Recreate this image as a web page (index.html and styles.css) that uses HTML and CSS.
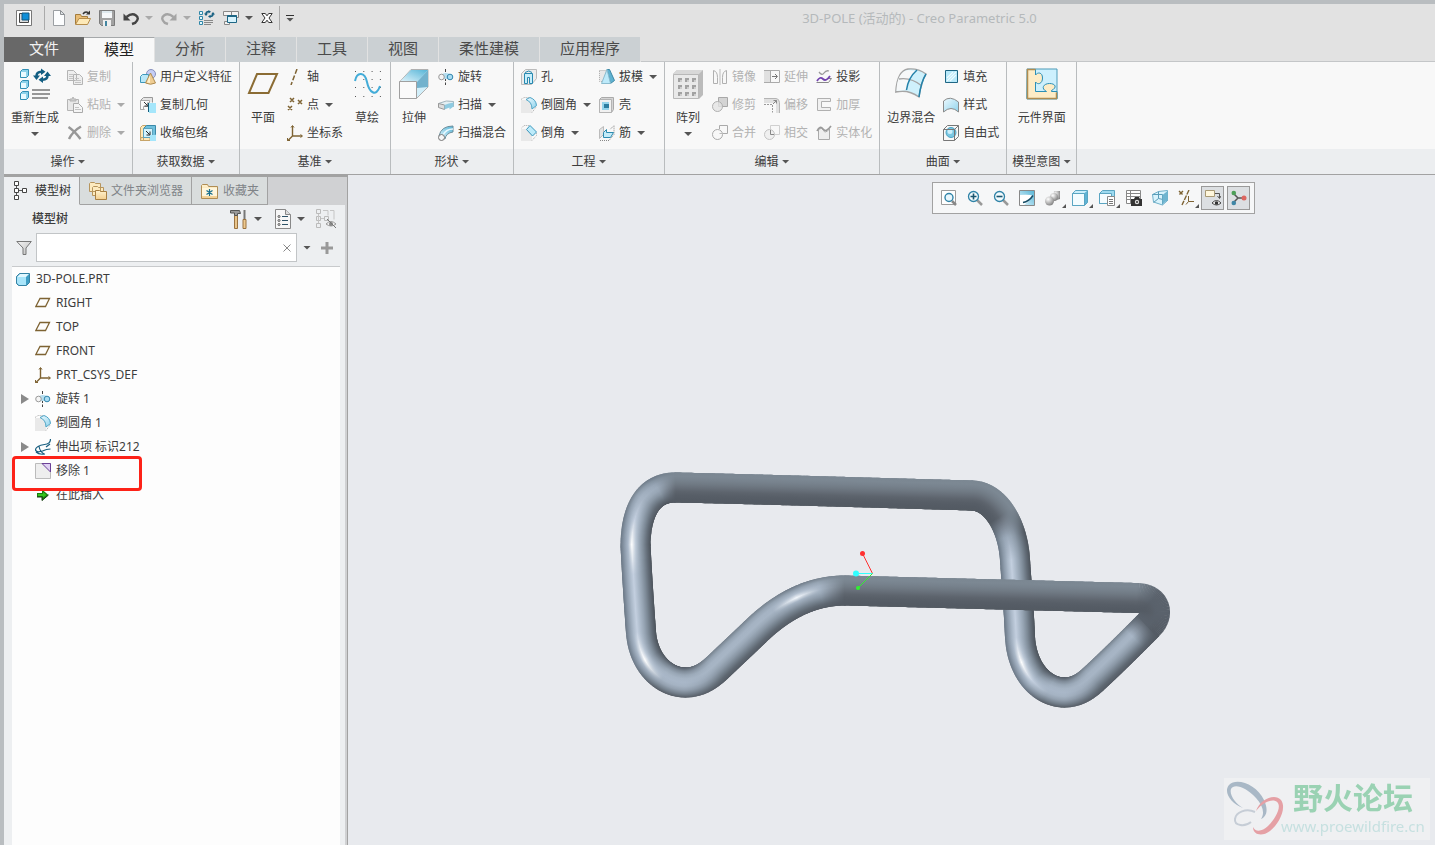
FILE: index.html
```html
<!DOCTYPE html>
<html lang="zh-CN">

<head>
    <meta charset="UTF-8">
    <meta name="viewport" content="width=device-width, initial-scale=1.0">
    <title>3D-POLE (活动的) - Creo Parametric 5.0</title>
    <link rel="stylesheet" href="styles.css">
</head>

<body>

    <!-- Icon sprite -->
    <svg class="sprite" aria-hidden="true">
        <defs>
            <linearGradient id="g-blue" x1="0" y1="0" x2="1" y2="1">
                <stop offset="0" stop-color="#eefaff" /><stop offset="1" stop-color="#8fd3ec" />
            </linearGradient>
            <linearGradient id="g-gray" x1="0" y1="0" x2="1" y2="1">
                <stop offset="0" stop-color="#f4f4f4" /><stop offset="1" stop-color="#bdbdbd" />
            </linearGradient>
            <linearGradient id="g-sky" x1="0" y1="1" x2="1" y2="0">
                <stop offset="0" stop-color="#e4f6fd" /><stop offset="1" stop-color="#55b4d6" />
            </linearGradient>
            <linearGradient id="g-gold" x1="0" y1="0" x2="0" y2="1">
                <stop offset="0" stop-color="#fff2cf" /><stop offset="1" stop-color="#f3cf90" />
            </linearGradient>
            <radialGradient id="g-ball" cx=".35" cy=".3" r=".8">
                <stop offset="0" stop-color="#fff" /><stop offset="1" stop-color="#777" />
            </radialGradient>
        </defs>

        <symbol id="app" viewBox="0 0 16 16">
            <path d="M.5.5h15v15H.5z" fill="#fff" stroke="#777" />
            <path d="M3.5 3.5h9v9h-9z" fill="#ddd" stroke="#444" />
            <path d="M6 3h7v7H6z" fill="#0f8fd8" stroke="#15567c" />
        </symbol>
        <symbol id="new" viewBox="0 0 16 16">
            <path d="M2.500.5h7l4 4v11h-11z" fill="#fcfdfe" stroke="#9b9fa3" />
            <path d="M9.500.5v4h4z" fill="#dfe3e7" stroke="#8c9094" />
        </symbol>
        <symbol id="open" viewBox="0 0 16 16">
            <path d="M.5 14V4.500h5l1 2h6V9" fill="#e9bd76" stroke="#a47c3c" />
            <path d="M.5 14.500L4 8.500h11.500l-3 6z" fill="#fde9b8" stroke="#b58c4b" />
            <path d="M8 4q2-3 5-1.500" fill="none" stroke="#333" stroke-width="1.500" />
            <path d="M11 4.500h4V.5z" fill="#333" />
        </symbol>
        <symbol id="save" viewBox="0 0 16 16">
            <path d="M.5.5h15v15h-13l-2-2z" fill="#a2a2a2" stroke="#7b7b7b" />
            <path d="M3 1h10v7H3z" fill="#f6f8fa" /><path d="M3 1h10v2H3z" fill="#dfe9ee" />
            <path d="M4 10h8v6H4z" fill="#eee" /><path d="M6 11h2v5H6z" fill="#4385a0" />
        </symbol>
        <symbol id="undo" viewBox="0 0 16 16">
            <path d="M3.500 7Q9 2.500 13 5.500t-1 7.500l-3 1" fill="none" stroke="#444" stroke-width="2.400" />
            <path d="M.5 3.500v7h7z" fill="#444" />
        </symbol>
        <symbol id="redo" viewBox="0 0 16 16">
            <path d="M12.500 7Q7 2.500 3 5.500t1 7.500l3 1" fill="none" stroke="#a4a4a4" stroke-width="2.400" />
            <path d="M15.500 3.500v7h-7z" fill="#a4a4a4" />
        </symbol>
        <symbol id="regen-s" viewBox="0 0 16 16">
            <path d="M.5 1.500h3v3h-3zM.5 6.500h3v3h-3zM.5 11.500h3v3h-3z" fill="#e3f8ff" stroke="#2f87a8" />
            <path d="M7 4Q7 1.500 10 1.500M14 4Q14 6.500 11 6.500" fill="none" stroke="#176082" stroke-width="1.500" />
            <path d="M9.500 0v3.500L12 1.700zM11.500 4.700v3.600L9 6.500zM5 3.500h4L7 6zM12 4.500h4L14 2z" fill="#176082" />
            <path d="M5 10.500h9M5 12.500h9M5 14.500h7" stroke="#888" />
        </symbol>
        <symbol id="windows" viewBox="0 0 16 16">
            <path d="M.5 1.500h8v4h-8zM8.500 1.500h7v6h-7zM1.500 11.500h5v3h-5z" fill="#f3f3f3" stroke="#888" />
            <path d="M4.500 5.500h9v7h-9z" fill="#d7f3fd" stroke="#1d6685" /><path d="M4.500 6h9" stroke="#1d6685" stroke-width="2" />
        </symbol>
        <symbol id="close" viewBox="0 0 12 12">
            <path d="M.8 1.500h3.500L6 3.800l1.700-2.300h3.500L8 6l3.200 4.500H7.700L6 8.200l-1.700 2.300H.8L4 6z" fill="#fff" stroke="#333" />
        </symbol>

        <symbol id="regen" viewBox="0 0 32 32">
            <path d="M1.500 3.500l2-2h6v6l-2 2h-6zM1.500 14.500l2-2h6v6l-2 2h-6zM1.500 25.500l2-2h6v6l-2 2h-6z" fill="#8dd2ea" stroke="#318fb4" />
            <path d="M2 4h5v5H2zM2 15h5v5H2zM2 26h5v5H2z" fill="#e9faff" />
            <path d="M17.500 8Q17.500 4 22.500 3.800M28.500 7.500Q28.500 11.500 23.500 11.800" fill="none" stroke="#135e82" stroke-width="2.500" />
            <path d="M22 .5v6.500l4.500-3.200zM24 8.500V15l-4.500-3.200zM14 7.500h7l-3.500 4.500zM25 8h7l-3.500-4.500z" fill="#135e82" />
            <path d="M13 22h18M13 26h18M13 30h16" stroke="#979797" stroke-width="2" />
        </symbol>
        <symbol id="copy" viewBox="0 0 16 16">
            <path d="M.5 1.500h6l3 3v7h-9zM6.500 5.500h6l3 3v7h-9z" fill="#eee" stroke="#b4b4b4" />
            <path d="M2 5.500h4M2 7.500h4M2 9.500h4M8 9.500h4M8 11.500h6M8 13.500h6" stroke="#c4c4c4" />
        </symbol>
        <symbol id="paste" viewBox="0 0 16 16">
            <path d="M.5 2.500h11v11H.5z" fill="#e8e8e8" stroke="#b4b4b4" />
            <path d="M3 4V2h2l1-2 1 2h2v2z" fill="#ccc" stroke="#b4b4b4" />
            <path d="M6.500 6.500h5l4 4v5h-9z" fill="#f5f5f5" stroke="#aaa" /><path d="M8 10.500h4M8 12.500h6" stroke="#c4c4c4" />
        </symbol>
        <symbol id="delete" viewBox="0 0 16 16">
            <path d="M1.500 2q6 4 12 12M14 1.500Q6 6 2 14" fill="none" stroke="#989898" stroke-width="2.500" />
        </symbol>
        <symbol id="udf" viewBox="0 0 16 16">
            <circle cx="11" cy="5" r="4.500" fill="#c5cdf6" stroke="#8790bc" />
            <path d="M.5 7.500l2-2h6v6l-2 2h-6z" fill="#b9e7f8" stroke="#3e98bb" />
            <path d="M10.500 4l5 10q-5 2.500-10 0z" fill="#efcd93" stroke="#ae8b51" />
            <path d="M10 6l-3 7.500 3 .5z" fill="#fff0cc" />
        </symbol>
        <symbol id="copygeom" viewBox="0 0 16 16">
            <path d="M.5 3.500l3-3h9v5M.5 3.500v9h4" fill="#e5e5e5" stroke="#999" /><path d="M.5 3.500h9v6h-6v3h-3z" fill="#fafafa" stroke="#aaa" />
            <path d="M4 5l3.500 3.500M8 5.500V9H4.500" fill="none" stroke="#333" />
            <path d="M9 6h7v10H9z" fill="#a5e6fb" /><path d="M8.500 6v9" stroke="#155d7a" />
        </symbol>
        <symbol id="shrink" viewBox="0 0 16 16">
            <path d="M.5 2.500l2-2h4v3h-3v12h-3zM1 12.500h9v3H.5z" fill="#ffe8b7" stroke="#c7a468" />
            <path d="M3.500 3.500l3-3h9v9l-3 3h-9z" fill="#6fc0dd" stroke="#3a89a9" /><path d="M3.500 3.500h9v9h-9z" fill="#d4f3fc" stroke="#5aa2bd" />
            <path d="M6 6l3.500 3.500M10 6.500V10H6.500" fill="none" stroke="#222" /><path d="M10 10h6v6h-6z" fill="#a5e6fb" />
        </symbol>
        <symbol id="plane" viewBox="0 0 32 32">
            <path d="M10 6h20l-8.500 19H2z" fill="none" stroke="#8b6c34" stroke-width="2" />
        </symbol>
        <symbol id="axis" viewBox="0 0 16 16">
            <path d="M10 0L4 16" fill="none" stroke="#7e6333" stroke-width="1.500" stroke-dasharray="5 2" />
        </symbol>
        <symbol id="point" viewBox="0 0 16 16">
            <path d="M3 1l4 4M7 1L3 5M11 3l4 4M15 3l-4 4M1 9l4 4M5 9l-4 4" stroke="#7e6333" stroke-width="1.500" />
        </symbol>
        <symbol id="csys" viewBox="0 0 16 16">
            <path d="M5.500 1v10h9.500M5.500 11l-5 5" fill="none" stroke="#7e6333" stroke-width="1.400" />
            <path d="M4 2.500L5.500.5 7 2.500M13.500 9.500l2 1.500-2 1.500M.5 13v2.500H3" fill="none" stroke="#7e6333" />
        </symbol>
        <symbol id="sketch" viewBox="0 0 32 32">
            <path d="M4 3.500h26M4 11.500h26M4 19.500h26M4 28.500h26" stroke="#555" stroke-dasharray="1 7.300" />
            <path d="M4 13C6 3 14 4 16 14S25 30 29 18" fill="none" stroke="#43acd8" stroke-width="2" />
        </symbol>
        <symbol id="extrude" viewBox="0 0 32 32">
            <path d="M1.500 14L13 1.500h17V19L18.500 30.500h-17z" fill="#d2effa" stroke="#b0b0b0" />
            <path d="M2 14L13 2h17L19 14z" fill="url(#g-sky)" /><path d="M19 14L30 2v17l-11 1z" fill="#73b2cd" />
            <path d="M1.500 13.500h17v17h-17z" fill="#fafafa" stroke="#a0a0a0" />
        </symbol>
        <symbol id="revolve" viewBox="0 0 16 16">
            <path d="M7.500 0v16" stroke="#444" stroke-dasharray="3 1.500" /><path d="M4 5q4-2 8 0l-3 5H6z" fill="#b4def0" />
            <circle cx="3.500" cy="8" r="2.800" fill="#f5f5f5" stroke="#999" /><circle cx="12" cy="8" r="2.800" fill="#a9dcf2" stroke="#3386ad" />
        </symbol>
        <symbol id="sweep" viewBox="0 0 16 16">
            <path d="M.5 6.500q8-4 15-2v5q-5-1-9 .5l-6-1z" fill="#e4eff3" stroke="#a3b4bb" />
            <path d="M.5 6.500l6 1.500v4.500l-6-2z" fill="#ddd" stroke="#999" /><path d="M6.500 8q4-2 9-2.500v4l-4 3v-2l-5 2z" fill="#8fcbe1" />
        </symbol>
        <symbol id="swblend" viewBox="0 0 16 16">
            <path d="M1 11Q3 1 15 1v6Q8 8 7 14z" fill="url(#g-sky)" stroke="#6d8f9d" /><path d="M5 10q3-6 10-6" fill="none" stroke="#e7f8fe" stroke-width="1.500" />
            <circle cx="3.500" cy="12.500" r="3" fill="#f5f5f5" stroke="#777" />
        </symbol>
        <symbol id="hole" viewBox="0 0 16 16">
            <path d="M.5 4.500l4-4h11v9l-5 6h-10z" fill="#ececec" stroke="#bbb" />
            <path d="M3.500 14.500v-10h8v10h-3v-6h-2v6z" fill="#c7eefb" stroke="#2789b0" /><path d="M4 3.500q4-3 7 0" fill="none" stroke="#2789b0" />
        </symbol>
        <symbol id="round" viewBox="0 0 16 16">
            <path d="M0 3h6q5 3 5 8v5H0z" fill="#e9e9e9" /><path d="M0 2.500L3 .5h5M11 15.500l4.500-6" fill="none" stroke="#aaa" stroke-dasharray="1 1" />
            <path d="M5 2.500L9 .5q6 2 6.500 8L11 12Q11 5 5 2.500z" fill="url(#g-blue)" stroke="#4da3c5" />
        </symbol>
        <symbol id="chamfer" viewBox="0 0 16 16">
            <path d="M0 4h6l5 5v7H0z" fill="#e9e9e9" /><path d="M0 3.500L3 .5h5M11 15.500l4.500-5v-3" fill="none" stroke="#aaa" stroke-dasharray="1 1" />
            <path d="M5.500 4.500L9 .5l6.500 6.500-4 4z" fill="#bdebfa" stroke="#3a96bc" />
        </symbol>
        <symbol id="draft" viewBox="0 0 16 16">
            <path d="M.5 1.500h7l-3 11h-4z" fill="#e8e8e8" stroke="#aaa" stroke-dasharray="1 1" />
            <path d="M8 .5h2.500l5 11-4 3z" fill="#5fb2d1" stroke="#3d88a5" /><path d="M8 .5l3.500 14h-9z" fill="#bdeafa" stroke="#8bbccf" />
        </symbol>
        <symbol id="shell" viewBox="0 0 16 16">
            <path d="M.5 2.500l2-2h12v12l-2 3H.5z" fill="#d4d4d4" stroke="#aaa" /><path d="M.5 2.500h12v13H.5z" fill="#f1f1f1" stroke="#b4b4b4" />
            <path d="M3 5h7v8H3z" fill="#94d3ea" /><path d="M5 7h5v4H5z" fill="#2c7da0" />
        </symbol>
        <symbol id="rib" viewBox="0 0 16 16">
            <path d="M1 15.500h9l5-6V.5l-4 4" fill="none" stroke="#888" stroke-dasharray="1 1" /><path d="M.5 4.500v9l4-4v-8z" fill="#e4e4e4" stroke="#bbb" />
            <path d="M4.500 7.500l3-3v3h7l-3 5h-7z" fill="#c4ecf9" stroke="#2d8bb0" />
        </symbol>
        <symbol id="pattern" viewBox="0 0 32 32">
            <path d="M1 6l4-4h26v25l-4 4z" fill="#bbb" /><path d="M1 6l4-4h26l-4 4z" fill="#d8d8d8" /><path d="M1.500 6.500h25v24h-25z" fill="#e9e9e9" stroke="#b8b8b8" />
            <path d="M6 10h4v4H6zM13 10h4v4h-4zM20 10h4v4h-4zM6 17h4v4H6zM13 17h4v4h-4zM20 17h4v4h-4zM6 24h4v4H6zM13 24h4v4h-4zM20 24h4v4h-4z" fill="#a2a2a2" />
            <path d="M8 12h2v2H8zM15 12h2v2h-2zM22 12h2v2h-2zM8 19h2v2H8zM15 19h2v2h-2zM22 19h2v2h-2zM8 26h2v2H8zM15 26h2v2h-2zM22 26h2v2h-2z" fill="#cecece" />
        </symbol>
        <symbol id="mirror" viewBox="0 0 16 16">
            <path d="M1.500 14.500v-13q4 1 4 7v6zM14.500 14.500v-13q-4 1-4 7v6z" fill="none" stroke="#b0b0b0" /><path d="M8 0v16" stroke="#bbb" />
        </symbol>
        <symbol id="trim" viewBox="0 0 16 16">
            <path d="M6.500.5h9v9h-9z" fill="#d4d4d4" stroke="#a8a8a8" /><circle cx="5.500" cy="9.500" r="5" fill="#e4e4e4" fill-opacity=".8" stroke="#b0b0b0" />
        </symbol>
        <symbol id="merge" viewBox="0 0 16 16">
            <path d="M7.500 4V.5h8v8H11" fill="none" stroke="#aaa" /><circle cx="5.500" cy="9.500" r="5" fill="none" stroke="#aaa" /><path d="M7.500 8.500H11" stroke="#bbb" />
        </symbol>
        <symbol id="extend" viewBox="0 0 16 16">
            <path d="M0 1h6v13H0z" fill="#e0e0e0" /><path d="M0 1.500h15.500v12H0M6.500 1.500v12" fill="none" stroke="#aaa" /><path d="M8 7.500h5M11 5l2.500 2.500L11 10" fill="none" stroke="#777" />
        </symbol>
        <symbol id="offset" viewBox="0 0 16 16">
            <path d="M0 1h12l3.500 3V16H12V6H0z" fill="#e0e0e0" /><path d="M0 1.500h12q3 0 3.500 4V16" fill="none" stroke="#b4b4b4" />
            <path d="M0 7.500h8.500v8" fill="none" stroke="#999" stroke-dasharray="2 1" /><path d="M9 7l3.500-3.500M9.500 3.500h3v3" fill="none" stroke="#888" />
        </symbol>
        <symbol id="intersect" viewBox="0 0 16 16">
            <path d="M6.500.5h9v9h-9z" fill="none" stroke="#d0d0d0" /><circle cx="5.500" cy="9.500" r="5" fill="#f0f0f0" stroke="#c4c4c4" /><path d="M6.500 5v4.500H10" fill="none" stroke="#888" />
        </symbol>
        <symbol id="project" viewBox="0 0 16 16">
            <path d="M3 3q3 4 5 1t5-2" fill="none" stroke="#999" stroke-width="1.300" /><path d="M12 9.500h3.500l-3 4H.5" fill="none" stroke="#888" />
            <path d="M1 12q3-5 6-2t7-3" fill="none" stroke="#7343ae" stroke-width="1.800" />
        </symbol>
        <symbol id="thicken" viewBox="0 0 16 16">
            <path d="M1.500 1.500h13v3h-9v6h9v3h-13z" fill="#f1f1f1" stroke="#b0b0b0" />
        </symbol>
        <symbol id="solidify" viewBox="0 0 16 16">
            <path d="M2.500 5v9.500h11V4Q9 9 7.500 5.500T3 4z" fill="#eee" stroke="#aaa" /><path d="M1 6Q4 0 7 4t8-3" fill="none" stroke="#999" stroke-width="1.600" />
        </symbol>
        <symbol id="boundary" viewBox="0 0 32 32">
            <path d="M.8 24Q2 3 13 1q10-1 18 5-5 8-7 23Q13 21 .8 24z" fill="#cff1fc" stroke="#a5a5a5" stroke-width="1.400" />
            <path d="M1.500 23Q2 4 13 2l8 1Q13 9 11.500 22z" fill="#f6f8f9" />
            <path d="M4 11q12-2 23 7" fill="none" stroke="#a5a5a5" stroke-width="1.400" /><path d="M22 2Q13 10 11.500 22M31 6q-5 8-7 23" fill="none" stroke="#2482aa" stroke-width="1.500" />
        </symbol>
        <symbol id="fill" viewBox="0 0 16 16">
            <path d="M2.500 1.500h12v12h-12z" fill="#b8e9fa" stroke="#1f6684" /><path d="M4 9l6-6M4 12l9-9M7 12l6-6" stroke="#effbff" stroke-width="1.200" />
        </symbol>
        <symbol id="style" viewBox="0 0 16 16">
            <path d="M.5 15V4Q7-2 15.500 5v10Q8 8 .5 15z" fill="url(#g-blue)" stroke="#8b8b8b" />
        </symbol>
        <symbol id="freestyle" viewBox="0 0 16 16">
            <circle cx="8" cy="7.500" r="5" fill="#7cc8e3" stroke="#4ba3c4" /><circle cx="7" cy="6.500" r="2.500" fill="#cdeffb" />
            <path d="M.5 4.500l4-4h11v11l-4 4H.5zM.5 4.500h11v11M11.500 4.500l4-4" fill="none" stroke="#777" />
        </symbol>
        <symbol id="puzzle" viewBox="0 0 32 32">
            <path d="M1 1h30v30H1z" fill="#cdf0fd" stroke="#4d9bb9" />
            <path d="M1.500 1.500h8V7c2-3 7-3 7 3s-5 7-7 4v9.500h11c-6-3-3-8 3-8s8 4 2 7v1h5.500v7H1z" fill="#fdecc6" stroke="#2b8fb6" />
            <path d="M9.500 1.500h-8v29h29v-6" fill="none" stroke="#b08c50" stroke-width="1.500" />
        </symbol>

        <symbol id="tree" viewBox="0 0 20 20">
            <path d="M4.500 5v10M5 9.500h6" stroke="#555" fill="none" /><path d="M2.500.5h4v4h-4zM2.500 7.500h4v4h-4zM2.500 14.500h4v4h-4zM10.500 7.500h4v4h-4z" fill="#fff" stroke="#444" />
        </symbol>
        <symbol id="folders" viewBox="0 0 20 20">
            <path d="M1.500 10.500v-8l1-1h4l1 1h5v8zM4.500 14.500v-8l1-1h4l1 1h5v8z" fill="#fdebc0" stroke="#b6955d" /><path d="M7.500 18.500v-9h4l1 1h6v8z" fill="url(#g-gold)" stroke="#a98043" />
        </symbol>
        <symbol id="favorite" viewBox="0 0 20 20">
            <path d="M1.500 17.500v-13l1-1h5l1 2h9v12z" fill="url(#g-gold)" stroke="#b08d54" /><path d="M2 7h15v8H2z" fill="#fff6dc" />
            <path d="M9.500 8v7M6.500 9.500l6 4M12.500 9.500l-6 4" stroke="#176e8c" stroke-width="1.200" />
        </symbol>
        <symbol id="tools" viewBox="0 0 20 20">
            <path d="M4.500 6.500h3v13h-3z" fill="#e8c48b" stroke="#9b7340" /><path d="M.5 1.500h9l1 3h-3v2h-3V4h-4z" fill="#999" stroke="#555" />
            <path d="M14.500 1v9" stroke="#777" stroke-width="2" /><path d="M13 10.500h3v9h-3z" fill="#edc98f" stroke="#9b7340" />
        </symbol>
        <symbol id="settings" viewBox="0 0 20 20">
            <path d="M2.500.5h10l5 5v14h-15z" fill="#f7f7f7" stroke="#888" /><path d="M12.500.5v5h5" fill="#ddd" stroke="#888" />
            <circle cx="6" cy="7.500" r="1" fill="none" stroke="#555" /><circle cx="6" cy="11.500" r="1" fill="none" stroke="#555" /><circle cx="6" cy="15.500" r="1" fill="none" stroke="#555" />
            <path d="M9 7.500h6M9 11.500h6M9 15.500h6" stroke="#2f5367" />
        </symbol>
        <symbol id="columns" viewBox="0 0 20 20">
            <path d="M.5.5h4v4h-4zM.5 7.500h4v4h-4zM.5 14.500h4v4h-4zM8.500 7.500h4v4h-4z" fill="none" stroke="#bbb" />
            <path d="M2.500 5v9M5 9.500h3M7 1.500h5v5M14 1.500h4v9" fill="none" stroke="#c5c5c5" />
            <path d="M10 15q5-5 10 0-5 4-10 0z" fill="#eee" stroke="#999" /><circle cx="15" cy="15" r="2" fill="#888" /><path d="M11 10l9 9" stroke="#777" />
        </symbol>
        <symbol id="funnel" viewBox="0 0 16 16">
            <path d="M.8 1.500h14.500L10 8v6.500H7V8z" fill="url(#g-gray)" stroke="#777" />
        </symbol>
        <symbol id="plus" viewBox="0 0 12 12"><path d="M6 0v12M0 6h12" stroke="#999" stroke-width="3" /></symbol>
        <symbol id="cross" viewBox="0 0 8 8"><path d="M.5.5l7 7M7.500.5l-7 7" stroke="#888" /></symbol>
        <symbol id="part" viewBox="0 0 16 16">
            <path d="M.5 5.500l3-3h10v9l-3 3h-8l-2-2z" fill="#3f9ec4" stroke="#3582a4" /><path d="M1 6l3-3h9l-3 3z" fill="#e1f7fe" /><path d="M1 6h9v8H3l-2-2z" fill="#a9e5fa" />
        </symbol>
        <symbol id="plane-s" viewBox="0 0 16 16"><path d="M5 3.500h9.500l-4 8H.8z" fill="none" stroke="#7e6333" stroke-width="1.300" /></symbol>
        <symbol id="protrude" viewBox="0 0 16 16">
            <path d="M15.500 0q0 5-6 5.500Q.5 7 .5 11q1 3 7 1 4-2 8-2M4 7.500q1 5 5 7.500M1 13q3 3 9 2M15 5l-4 3" fill="none" stroke="#195f80" stroke-width="1.200" />
        </symbol>
        <symbol id="remove" viewBox="0 0 16 16">
            <path d="M.5.5h15v15H.5z" fill="#eee" stroke="#bbb" /><path d="M7 .5h8.500V9z" fill="#dfd0f3" stroke="#6b4096" />
        </symbol>
        <symbol id="insert" viewBox="0 0 16 16">
            <path d="M2 6h5V2.500L13.500 8 7 13.500V10H2z" fill="#1c7d10" /><path d="M3 7h5V5l3.500 3L8 10.500V9H3z" fill="#35c21d" />
            <path d="M2 10h5v3.500L13.500 8" fill="none" stroke="#143c10" />
        </symbol>

        <symbol id="v-fit" viewBox="0 0 16 16">
            <path d="M.5 14.500V.5h14v14z" fill="#fff" stroke="#9c9c9c" /><path d="M11 11l4 4" stroke="#888" stroke-width="2.500" /><circle cx="8" cy="7.500" r="4" fill="#e9f7fd" stroke="#2f83a7" stroke-width="1.400" />
        </symbol>
        <symbol id="v-in" viewBox="0 0 16 16">
            <path d="M10 10l5 5" stroke="#999" stroke-width="2.500" /><circle cx="6.500" cy="6.500" r="5" fill="#f2fafd" stroke="#2f83a7" stroke-width="1.300" /><path d="M3.500 6.500h6M6.500 3.500v6" stroke="#1a566f" stroke-width="1.600" />
        </symbol>
        <symbol id="v-out" viewBox="0 0 16 16">
            <path d="M10 10l5 5" stroke="#999" stroke-width="2.500" /><circle cx="6.500" cy="6.500" r="5" fill="#f2fafd" stroke="#2f83a7" stroke-width="1.300" /><path d="M3.500 6.500h6" stroke="#1a566f" stroke-width="1.600" />
        </symbol>
        <symbol id="v-repaint" viewBox="0 0 16 16">
            <path d="M.5.5h15v15H.5z" fill="url(#g-sky)" stroke="#888" /><path d="M1 5q10-1 13 1-4 6-9 9H1z" fill="#fff" /><path d="M4 12.500q6-1 10-7" fill="none" stroke="#174d66" stroke-width="1.500" />
        </symbol>
        <symbol id="v-shade" viewBox="0 0 16 16">
            <path d="M9 1h6v8l-7 2z" fill="url(#g-ball)" /><circle cx="9" cy="7" r="4" fill="url(#g-ball)" /><circle cx="4.500" cy="11" r="4.500" fill="url(#g-ball)" />
        </symbol>
        <symbol id="v-style" viewBox="0 0 16 16">
            <path d="M.5 3.500l3-3h12v12l-3 3H.5z" fill="#5fb3d4" stroke="#5aa5c2" /><path d="M.5 3.500h12v12H.5z" fill="#f4fcff" stroke="#5aa5c2" /><path d="M1.500 3l2-2H15l-2.500 2z" fill="#cbeffc" />
        </symbol>
        <symbol id="v-saved" viewBox="0 0 16 16">
            <path d="M.5 3.500l3-3h12v12l-3 1H.5z" fill="#9ddaf0" stroke="#5aa5c2" /><path d="M.5 3.500h12v10H.5z" fill="#f4fcff" stroke="#5aa5c2" />
            <path d="M8.500 6.500h7v9h-7z" fill="#fff" stroke="#888" /><path d="M10 9.500h4M10 11.500h4M10 13.500h4" stroke="#777" />
        </symbol>
        <symbol id="v-manager" viewBox="0 0 16 16">
            <path d="M.5.5h14v13H.5zM.5 3.500h14M.5 6.500h14M.5 9.500h14M4.500.5v13" fill="#fff" stroke="#888" />
            <path d="M5 9h3l1-2h4l1 2h2v7H5z" fill="#333" /><circle cx="11" cy="12" r="2.200" fill="#ddd" /><circle cx="11" cy="12" r="1" fill="#333" />
        </symbol>
        <symbol id="v-persp" viewBox="0 0 16 16">
            <path d="M.5 4.500l6-3 9-1v10l-5 4.500-9-3z" fill="#d9f3fc" stroke="#6fb0ca" /><path d="M6.500 1.500v7l-5 4M6.500 8.500l9 2M.5 4.500h10v10" fill="none" stroke="#5a9db9" /><path d="M10.500 5l5-4v9l-5 4.500z" fill="#6fb5d0" />
        </symbol>
        <symbol id="v-datum" viewBox="0 0 16 16">
            <path d="M1 1l4 4M5 1L1 5M11 0L4 15" stroke="#7e6333" stroke-width="1.400" stroke-dasharray="5 1" /><path d="M10.500 6v5.500H16M10.500 11.500l-2.500 3" fill="none" stroke="#7e6333" />
        </symbol>
        <symbol id="v-annot" viewBox="0 0 16 16">
            <path d="M.5.5h9v6h-9z" fill="#fff7dc" stroke="#a99a75" /><path d="M10 3.500h4.500V8M12.500 6l2 2.500L16 6" fill="none" stroke="#555" />
            <path d="M7 13q4.500-5 9 0-4.500 4-9 0z" fill="#fff" stroke="#444" /><circle cx="11.500" cy="13" r="1.800" fill="#333" />
        </symbol>
        <symbol id="v-spin" viewBox="0 0 16 16">
            <path d="M7 8L2 3M7 8h6M7 8l-5 5" stroke="#555" stroke-width="1.500" /><circle cx="2.800" cy="3" r="2.300" fill="#4d9f58" /><circle cx="13" cy="8" r="2.500" fill="#dc6660" /><circle cx="2.800" cy="13" r="2.300" fill="#3f86a5" />
        </symbol>
    </svg>

    <div class="window">
        <header class="title-bar">
            <div class="quick-access">
                <button class="qa-button system" aria-label="窗口"><svg class="icon"><use href="#app" /></svg></button>
                <span class="separator"></span>
                <button class="qa-button" aria-label="新建"><svg class="icon"><use href="#new" /></svg></button>
                <button class="qa-button" aria-label="打开"><svg class="icon"><use href="#open" /></svg></button>
                <button class="qa-button" aria-label="保存"><svg class="icon"><use href="#save" /></svg></button>
                <button class="qa-button" aria-label="撤消"><svg class="icon"><use href="#undo" /></svg><i class="arrow dim"></i></button>
                <button class="qa-button" aria-label="重做"><svg class="icon"><use href="#redo" /></svg><i class="arrow dim"></i></button>
                <button class="qa-button" aria-label="重新生成模型"><svg class="icon"><use href="#regen-s" /></svg></button>
                <button class="qa-button" aria-label="窗口列表"><svg class="icon"><use href="#windows" /></svg><i class="arrow"></i></button>
                <button class="qa-button" aria-label="关闭"><svg class="icon small"><use href="#close" /></svg></button>
                <span class="separator"></span>
                <button class="qa-button customize" aria-label="自定义"><i class="arrow"></i></button>
            </div>
            <div class="window-title">3D-POLE (活动的) - Creo Parametric 5.0</div>
        </header>

        <nav class="tabs">
            <button class="tab file">文件</button>
            <button class="tab active">模型</button>
            <button class="tab">分析</button>
            <button class="tab">注释</button>
            <button class="tab">工具</button>
            <button class="tab">视图</button>
            <button class="tab">柔性建模</button>
            <button class="tab">应用程序</button>
        </nav>

        <div class="ribbon">
            <section class="group">
                <div class="group-body">
                    <button class="big wide"><svg class="icon-big"><use href="#regen" /></svg><span>重新生成</span><i class="arrow"></i></button>
                    <div class="column">
                        <button class="cmd" disabled><svg class="icon"><use href="#copy" /></svg>复制</button>
                        <button class="cmd" disabled><svg class="icon"><use href="#paste" /></svg>粘贴<i class="arrow"></i></button>
                        <button class="cmd" disabled><svg class="icon"><use href="#delete" /></svg>删除<i class="arrow"></i></button>
                    </div>
                </div>
                <button class="group-label">操作<i class="arrow"></i></button>
            </section>
            <section class="group">
                <div class="group-body">
                    <div class="column">
                        <button class="cmd"><svg class="icon"><use href="#udf" /></svg>用户定义特征</button>
                        <button class="cmd"><svg class="icon"><use href="#copygeom" /></svg>复制几何</button>
                        <button class="cmd"><svg class="icon"><use href="#shrink" /></svg>收缩包络</button>
                    </div>
                </div>
                <button class="group-label">获取数据<i class="arrow"></i></button>
            </section>
            <section class="group">
                <div class="group-body">
                    <button class="big"><svg class="icon-big"><use href="#plane" /></svg><span>平面</span></button>
                    <div class="column">
                        <button class="cmd"><svg class="icon"><use href="#axis" /></svg>轴</button>
                        <button class="cmd"><svg class="icon"><use href="#point" /></svg>点<i class="arrow"></i></button>
                        <button class="cmd"><svg class="icon"><use href="#csys" /></svg>坐标系</button>
                    </div>
                    <button class="big"><svg class="icon-big"><use href="#sketch" /></svg><span>草绘</span></button>
                </div>
                <button class="group-label">基准<i class="arrow"></i></button>
            </section>
            <section class="group">
                <div class="group-body">
                    <button class="big"><svg class="icon-big"><use href="#extrude" /></svg><span>拉伸</span></button>
                    <div class="column">
                        <button class="cmd"><svg class="icon"><use href="#revolve" /></svg>旋转</button>
                        <button class="cmd"><svg class="icon"><use href="#sweep" /></svg>扫描<i class="arrow"></i></button>
                        <button class="cmd"><svg class="icon"><use href="#swblend" /></svg>扫描混合</button>
                    </div>
                </div>
                <button class="group-label">形状<i class="arrow"></i></button>
            </section>
            <section class="group">
                <div class="group-body">
                    <div class="column">
                        <button class="cmd"><svg class="icon"><use href="#hole" /></svg>孔</button>
                        <button class="cmd"><svg class="icon"><use href="#round" /></svg>倒圆角<i class="arrow"></i></button>
                        <button class="cmd"><svg class="icon"><use href="#chamfer" /></svg>倒角<i class="arrow"></i></button>
                    </div>
                    <div class="column">
                        <button class="cmd"><svg class="icon"><use href="#draft" /></svg>拔模<i class="arrow"></i></button>
                        <button class="cmd"><svg class="icon"><use href="#shell" /></svg>壳</button>
                        <button class="cmd"><svg class="icon"><use href="#rib" /></svg>筋<i class="arrow"></i></button>
                    </div>
                </div>
                <button class="group-label">工程<i class="arrow"></i></button>
            </section>
            <section class="group">
                <div class="group-body">
                    <button class="big"><svg class="icon-big"><use href="#pattern" /></svg><span>阵列</span><i class="arrow"></i></button>
                    <div class="column">
                        <button class="cmd" disabled><svg class="icon"><use href="#mirror" /></svg>镜像</button>
                        <button class="cmd" disabled><svg class="icon"><use href="#trim" /></svg>修剪</button>
                        <button class="cmd" disabled><svg class="icon"><use href="#merge" /></svg>合并</button>
                    </div>
                    <div class="column">
                        <button class="cmd" disabled><svg class="icon"><use href="#extend" /></svg>延伸</button>
                        <button class="cmd" disabled><svg class="icon"><use href="#offset" /></svg>偏移</button>
                        <button class="cmd" disabled><svg class="icon"><use href="#intersect" /></svg>相交</button>
                    </div>
                    <div class="column">
                        <button class="cmd"><svg class="icon"><use href="#project" /></svg>投影</button>
                        <button class="cmd" disabled><svg class="icon"><use href="#thicken" /></svg>加厚</button>
                        <button class="cmd" disabled><svg class="icon"><use href="#solidify" /></svg>实体化</button>
                    </div>
                </div>
                <button class="group-label">编辑<i class="arrow"></i></button>
            </section>
            <section class="group">
                <div class="group-body">
                    <button class="big wide"><svg class="icon-big"><use href="#boundary" /></svg><span>边界混合</span></button>
                    <div class="column">
                        <button class="cmd"><svg class="icon"><use href="#fill" /></svg>填充</button>
                        <button class="cmd"><svg class="icon"><use href="#style" /></svg>样式</button>
                        <button class="cmd"><svg class="icon"><use href="#freestyle" /></svg>自由式</button>
                    </div>
                </div>
                <button class="group-label">曲面<i class="arrow"></i></button>
            </section>
            <section class="group">
                <div class="group-body">
                    <button class="big wide"><svg class="icon-big"><use href="#puzzle" /></svg><span>元件界面</span></button>
                </div>
                <button class="group-label">模型意图<i class="arrow"></i></button>
            </section>
        </div>

        <main class="workspace">
            <aside class="navigator">
                <div class="nav-tabs">
                    <button class="nav-tab active"><svg class="icon-nav"><use href="#tree" /></svg>模型树</button>
                    <button class="nav-tab"><svg class="icon-nav"><use href="#folders" /></svg>文件夹浏览器</button>
                    <button class="nav-tab"><svg class="icon-nav"><use href="#favorite" /></svg>收藏夹</button>
                </div>
                <div class="nav-panel">
                    <div class="tree-header">
                        <h2>模型树</h2>
                        <button class="tool" aria-label="工具"><svg class="icon-nav"><use href="#tools" /></svg><i class="arrow"></i></button>
                        <button class="tool" aria-label="设置"><svg class="icon-nav"><use href="#settings" /></svg><i class="arrow"></i></button>
                        <button class="tool" aria-label="树列" disabled><svg class="icon-nav"><use href="#columns" /></svg></button>
                    </div>
                    <div class="filter">
                        <svg class="icon"><use href="#funnel" /></svg>
                        <div class="filter-box">
                            <input type="text" aria-label="过滤器">
                            <button aria-label="清除"><svg class="icon-x"><use href="#cross" /></svg></button>
                        </div>
                        <button class="filter-more" aria-label="过滤选项"><i class="arrow"></i></button>
                        <button aria-label="添加"><svg class="icon small"><use href="#plus" /></svg></button>
                    </div>
                    <ul class="tree">
                        <li class="root"><svg class="icon"><use href="#part" /></svg>3D-POLE.PRT</li>
                        <li><svg class="icon"><use href="#plane-s" /></svg>RIGHT</li>
                        <li><svg class="icon"><use href="#plane-s" /></svg>TOP</li>
                        <li><svg class="icon"><use href="#plane-s" /></svg>FRONT</li>
                        <li><svg class="icon"><use href="#csys" /></svg>PRT_CSYS_DEF</li>
                        <li class="parent"><svg class="icon"><use href="#revolve" /></svg>旋转 1</li>
                        <li><svg class="icon"><use href="#round" /></svg>倒圆角 1</li>
                        <li class="parent"><svg class="icon"><use href="#protrude" /></svg>伸出项 标识212</li>
                        <li class="marked"><svg class="icon"><use href="#remove" /></svg>移除 1</li>
                        <li><svg class="icon"><use href="#insert" /></svg>在此插入</li>
                    </ul>
                </div>
            </aside>

            <div class="viewport">
                <canvas id="model"></canvas>
                <div class="view-bar">
                    <button aria-label="重新调整"><svg class="icon"><use href="#v-fit" /></svg></button>
                    <button aria-label="放大"><svg class="icon"><use href="#v-in" /></svg></button>
                    <button aria-label="缩小"><svg class="icon"><use href="#v-out" /></svg></button>
                    <button aria-label="重画"><svg class="icon"><use href="#v-repaint" /></svg></button>
                    <button class="drop" aria-label="渲染"><svg class="icon"><use href="#v-shade" /></svg></button>
                    <button class="drop" aria-label="显示样式"><svg class="icon"><use href="#v-style" /></svg></button>
                    <button class="drop" aria-label="已保存方向"><svg class="icon"><use href="#v-saved" /></svg></button>
                    <button aria-label="视图管理器"><svg class="icon"><use href="#v-manager" /></svg></button>
                    <button aria-label="透视图"><svg class="icon"><use href="#v-persp" /></svg></button>
                    <button class="drop" aria-label="基准显示"><svg class="icon"><use href="#v-datum" /></svg></button>
                    <button class="on" aria-label="注释显示"><svg class="icon"><use href="#v-annot" /></svg></button>
                    <button class="on" aria-label="旋转中心"><svg class="icon"><use href="#v-spin" /></svg></button>
                </div>
                <div class="watermark">
                    <svg class="watermark-logo" viewBox="0 0 58 58">
                        <path fill-rule="evenodd" fill="#a9b8c6" d="M3 5C11-3 31 5 38 20c5 11 2 17-3 19 4-6 2-13-5-21C20 7 8 3 5 9c-2 6 5 15 12 19C5 24-3 12 3 5z" />
                        <path fill-rule="evenodd" fill="#e5a0a5" d="M30 31c4-12 19-18 25-11 6 8-2 24-11 31-8 6-17 4-17-4 2 5 9 5 15-1 8-8 14-20 9-24-4-4-14 0-21 9z" />
                        <path fill="none" stroke="#c6cdd6" stroke-width="2" d="M29 32c-9-4-19 0-20 7s10 8 16 3" />
                    </svg>
                    <div class="watermark-text">
                        <strong>野火论坛</strong>
                        <span>www.proewildfire.cn</span>
                    </div>
                </div>
            </div>
        </main>
    </div>

    <script src="model.js"></script>
</body>

</html>
```

FILE: styles.css
```css
*,
*::before,
*::after {
    box-sizing: border-box;
}

body {
    margin: 0;
    font-family: "Noto Sans", "Noto Sans CJK SC", sans-serif;
    font-size: 12px;
    line-height: 16px;
    color: #3c3c3c;
    background-color: #b9bdc0;
}

button {
    display: flex;
    align-items: center;
    padding: 0;
    border: none;
    background: none;
    font: inherit;
    color: inherit;
    white-space: nowrap;
}

svg {
    flex: none;
}

.sprite {
    position: absolute;
    width: 0;
    height: 0;
}

.icon {
    width: 16px;
    height: 16px;
}

.icon.small {
    width: 12px;
    height: 12px;
}

.icon-big {
    width: 32px;
    height: 32px;
}

.icon-nav {
    width: 20px;
    height: 20px;
}

.icon-x {
    width: 8px;
    height: 8px;
}

.arrow {
    flex: none;
    width: 8px;
    height: 4px;
    background-color: #555;
    clip-path: polygon(0 0, 100% 0, 50% 100%);
}

.window {
    display: flex;
    flex-direction: column;
    min-height: 100vh;
    padding: 4px 0 0 4px;
}

/* Title bar */
.title-bar {
    display: flex;
    align-items: center;
    height: 33px;
    padding-bottom: 5px;
    background-color: #e2e2e2;
}

.quick-access {
    display: flex;
    align-items: center;
    gap: 8px;
    padding-left: 12px;
}

.qa-button {
    gap: 6px;
}

.qa-button.system {
    padding-right: 6px;
}

.qa-button .dim {
    background-color: #aaa;
}

.customize {
    padding-top: 2px;
    border-top: 1px solid #333;
}

.separator {
    width: 1px;
    height: 24px;
    margin: 0 -2px;
    background-color: #aaa;
}

.window-title {
    flex: 1;
    margin-left: 110px;
    font-size: 13px;
    text-align: center;
    color: #b5b9bb;
}

/* Ribbon tabs */
.tabs {
    display: flex;
    height: 25px;
    background-color: #e2e2e2;
    box-shadow: inset 0 -1px #c4c6c8;
}

.tab {
    padding: 0 20px 3px;
    border-right: 1px solid #e2e2e2;
    background-color: #cbd0d3;
    font-size: 15px;
    color: #4a4a4a;
}

.tab.file {
    padding: 0 25px 3px;
    border-right: none;
    background-color: #686868;
    color: #f2f2f2;
}

.tab.active {
    border-top: 1px solid #a5a8aa;
    background-color: #f8f8f8;
    color: #222;
}

/* Ribbon */
.ribbon {
    display: flex;
    height: 113px;
    border-bottom: 1px solid #a2a2a2;
    background: linear-gradient(#f8f8f8 87px, #eceef0 87px);
}

.group {
    display: flex;
    flex-direction: column;
    border-right: 1px solid #b9bcbe;
}

.group-body {
    display: flex;
    justify-content: center;
    gap: 8px;
    height: 87px;
    padding: 1px 7px 0;
}

.group-label {
    flex: 1;
    justify-content: center;
    gap: 3px;
    padding: 0 5px;
}

.big {
    flex-direction: column;
    width: 32px;
    padding-top: 5px;
}

.big.wide {
    width: 48px;
}

.big span {
    margin: 10px 0 6px;
}

.column {
    display: flex;
    flex-direction: column;
}

.cmd {
    gap: 4px;
    height: 28px;
}

.cmd .arrow {
    margin-left: 2px;
}

.cmd:disabled {
    color: #b2b2b2;
}

.cmd:disabled .arrow {
    background-color: #aaa;
}

/* Navigator */
.workspace {
    display: flex;
    flex: 1;
}

.navigator {
    display: flex;
    flex-direction: column;
    width: 344px;
    padding-right: 2px;
    border-top: 2px solid #a2a2a2;
    border-right: 1px solid #a2a2a2;
    background-color: #d0d1d3;
}

.nav-tabs {
    display: flex;
    height: 28px;
}

.nav-tab {
    gap: 3px;
    padding: 0 8px;
    border-right: 1px solid #a2a2a2;
    border-bottom: 1px solid #a2a2a2;
    background-color: #d9dddd;
    color: #808488;
}

.nav-tab.active {
    border-bottom-color: #edeff1;
    background-color: #edeff1;
    color: #333;
}

.nav-panel {
    display: flex;
    flex: 1;
    flex-direction: column;
    padding: 0 5px 0 8px;
    background-color: #edeff1;
}

.tree-header {
    display: flex;
    align-items: center;
    gap: 11px;
    height: 28px;
    padding-right: 4px;
}

.tree-header h2 {
    flex: 1;
    margin: 0;
    padding-left: 20px;
    font-size: 12px;
    font-weight: 500;
}

.tool {
    gap: 4px;
}

.filter {
    display: flex;
    align-items: center;
    gap: 4px;
    height: 29px;
    margin-bottom: 4px;
    padding: 0 7px 0 4px;
}

.filter-box {
    display: flex;
    flex: 1;
    align-self: stretch;
    padding-right: 5px;
    border: 1px solid #c2c5c7;
    background-color: #fff;
}

.filter-box input {
    flex: 1;
    min-width: 0;
    border: none;
    outline: none;
    background: none;
    font: inherit;
}

.filter-more {
    padding: 0 6px 0 2px;
}

.tree {
    flex: 1;
    margin: 0;
    padding: 0;
    border-top: 1px solid #c8cacc;
    background-color: #fdfdfd;
    list-style: none;
}

.tree li {
    display: flex;
    position: relative;
    align-items: center;
    gap: 5px;
    height: 24px;
    padding-left: 23px;
}

.tree .root {
    gap: 4px;
    padding-left: 4px;
}

.tree .parent {
    padding-left: 9px;
}

.tree .parent::before {
    content: "";
    width: 8px;
    height: 10px;
    margin-right: 1px;
    background-color: #8a8a8a;
    clip-path: polygon(0 0, 100% 50%, 0 100%);
}

/* Red frame round the feature in question */
.tree .marked::after {
    content: "";
    position: absolute;
    top: -3px;
    left: 0;
    width: 130px;
    height: 35px;
    border: 3px solid #fd2218;
    border-radius: 4px;
    z-index: 1;
}

/* Graphics area */
.viewport {
    display: flex;
    position: relative;
    flex: 1;
    min-width: 0;
    background-color: #e8eaee;
}

#model {
    position: absolute;
    width: 100%;
    height: 100%;
}

.view-bar {
    display: flex;
    position: absolute;
    top: 7px;
    right: 180px;
    gap: 3px;
    padding: 3px 4px;
    border: 1px solid #a2a2a2;
    background-color: #f6f7f8;
}

.view-bar button {
    position: relative;
    justify-content: center;
    width: 23px;
    height: 24px;
    border: 1px solid transparent;
}

.view-bar .drop {
    width: 24px;
}

.view-bar .drop::after {
    content: "";
    position: absolute;
    right: -2px;
    bottom: 1px;
    border: 2px solid;
    border-color: transparent #555 #555 transparent;
}

.view-bar .on {
    border-color: #999;
    background-color: #dcdfe2;
}

.watermark {
    display: flex;
    position: absolute;
    right: 5px;
    bottom: 5px;
    width: 206px;
    height: 62px;
    background-color: #eff0f2;
}

.watermark-logo {
    width: 58px;
    height: 58px;
    margin: 2px 0 0 2px;
}

.watermark-text {
    display: flex;
    flex-direction: column;
    flex: 1;
    min-width: 0;
    margin-left: -3px;
}

.watermark strong {
    padding-left: 12px;
    font-size: 30px;
    line-height: 40px;
    font-weight: 700;
    color: #9ad2b3;
}

.watermark span {
    font-size: 15px;
    color: #c6e0e0;
}
```

FILE: model.js
```javascript
const canvas = document.getElementById('model');
const ctx = canvas.getContext('2d');
const RADIUS = 15;

// Shades across the tube, from one edge to the other
const bar = ['#7b8792', '#7c8893', '#77828d', '#707a84', '#676f79', '#5d646d', '#575e67', '#545b64', '#535a62'];
const leg = ['#6b7886', '#8d9bab', '#aab8c8', '#c3cfdf', '#acbaca', '#96a4b3', '#7d8a97', '#626c77', '#4c535b'];
const matt = ['#6b7886', '#8593a1', '#96a4b4', '#9dabbb', '#98a6b5', '#8a97a5', '#75818d', '#606973', '#4c535b'];
const shine = ['#6b7886', '#8b99a9', '#abb9ca', '#ffffff', '#c0ccda', '#9ba9b8', '#808d9a', '#636d78', '#4c535b'];
const diagonal = ['#77838f', '#96a4b3', '#a5b3c3', '#a7b5c5', '#9ba9b8', '#8a97a5', '#74808c', '#5f6872', '#545b64'];
const glint = ['#6d7986', '#94a2b1', '#b3c0d0', '#f4f8fd', '#a6b4c4', '#8e9ba9', '#74808c', '#606973', '#545b64'];
const bottom = ['#545c66', '#7d8996', '#98a6b5', '#a6b4c4', '#a9b7c8', '#a5b3c3', '#94a1b0', '#76828e', '#565d66'];
const shadow = ['#59616b', '#59616b', '#5a626c', '#5a626c', '#59616b', '#575e67', '#555c65', '#545b64', '#535a62'];
const flip = (shades) => [...shades].reverse();

// Centre line: start, two control points, end, shades along the piece
const pieces = [
    [[1148, 626], [1130, 644], [1112, 662], [1093, 679.5], [flip(shadow), flip(diagonal), flip(diagonal), flip(diagonal), flip(diagonal)]],
    [[1093, 679.5], [1085, 687], [1076, 692.5], [1064.5, 692.5], [flip(diagonal), flip(bottom)]],
    [[1064.5, 692.5], [1043, 692.5], [1022, 672], [1020, 637], [flip(bottom), flip(bottom), leg, shine, leg]],
    [[1020, 637], [1019, 612], [1017, 590], [1015, 560], [leg, leg]],
    [[1015, 560], [1013, 525], [995, 496], [972, 495.5], [leg, matt, flip(bar), flip(bar), flip(bar)]],
    [[972, 495.5], [900, 493.5], [750, 489], [675, 487.5], [flip(bar), flip(bar)]],
    [[675, 487.5], [650, 487.5], [636, 508], [635.5, 545], [flip(bar), flip(matt), flip(diagonal), flip(leg), flip(shine)]],
    [[635.5, 545], [637, 575], [639, 605], [641, 632], [flip(shine), flip(leg), flip(leg), flip(leg)]],
    [[641, 632], [643, 662], [663, 682.5], [685.5, 682.5], [flip(leg), flip(shine), bottom, bottom]],
    [[685.5, 682.5], [699, 682.5], [708, 676], [716, 669], [bottom, diagonal]],
    [[716, 669], [729, 656.5], [742, 644.5], [755, 632], [diagonal, diagonal]],
    [[755, 632], [783, 604.5], [813, 590.5], [845, 590.5], [diagonal, diagonal, glint, diagonal, bar]],
    [[845, 590.5], [940, 593], [1040, 595.5], [1137, 598], [bar, bar]],
    [[1137, 598], [1155, 598], [1161, 614], [1148, 626], [bar, shadow, shadow, flip(shadow)]]
];

function toRgb(hex) {
    return [1, 3, 5].map((i) => parseInt(hex.slice(i, i + 2), 16));
}

function mix(a, b, t) {
    const to = toRgb(b);
    return 'rgb(' + toRgb(a).map((v, i) => Math.round(v + (to[i] - v) * t)).join(',') + ')';
}

function drawPiece([a, b, c, d, shades]) {
    const steps = Math.ceil(Math.hypot(d[0] - a[0], d[1] - a[1]) * 1.5);
    for (let i = 0; i <= steps; i++) {
        const t = i / steps;
        const u = 1 - t;
        const point = [0, 1].map((k) => u * u * u * a[k] + 3 * u * u * t * b[k] + 3 * u * t * t * c[k] + t * t * t * d[k]);
        const slope = [0, 1].map((k) => u * u * (b[k] - a[k]) + 2 * u * t * (c[k] - b[k]) + t * t * (d[k] - c[k]));
        const length = Math.hypot(slope[0], slope[1]);
        const nx = -slope[1] / length * RADIUS;
        const ny = slope[0] / length * RADIUS;

        const along = t * (shades.length - 1);
        const index = Math.min(Math.floor(along), shades.length - 2);
        const gradient = ctx.createLinearGradient(point[0] - nx, point[1] - ny, point[0] + nx, point[1] + ny);
        shades[index].forEach((shade, k) => {
            gradient.addColorStop(k / 8, mix(shade, shades[index + 1][k], along - index));
        });

        ctx.strokeStyle = gradient;
        ctx.lineWidth = 2;
        ctx.beginPath();
        ctx.moveTo(point[0] - nx, point[1] - ny);
        ctx.lineTo(point[0] + nx, point[1] + ny);
        ctx.stroke();
    }
}

function drawAxis(x, y, color, size) {
    ctx.strokeStyle = color;
    ctx.fillStyle = color;
    ctx.lineWidth = 1;
    ctx.beginPath();
    ctx.moveTo(872.5, 573.5);
    ctx.lineTo(x, y);
    ctx.stroke();
    ctx.beginPath();
    ctx.arc(x, y, size, 0, Math.PI * 2);
    ctx.fill();
}

function draw() {
    canvas.width = canvas.clientWidth;
    canvas.height = canvas.clientHeight;
    // Keep the model in the same place relative to the middle of the view
    ctx.translate(Math.round(canvas.width / 2) - 892, Math.round(canvas.height / 2) - 510);
    pieces.forEach(drawPiece);
    drawAxis(862.5, 553.5, '#ff3030', 2.5);
    drawAxis(856, 573.5, '#30ffff', 3);
    drawAxis(858, 588, '#30f030', 2);
}

window.addEventListener('resize', draw);
draw();
```
